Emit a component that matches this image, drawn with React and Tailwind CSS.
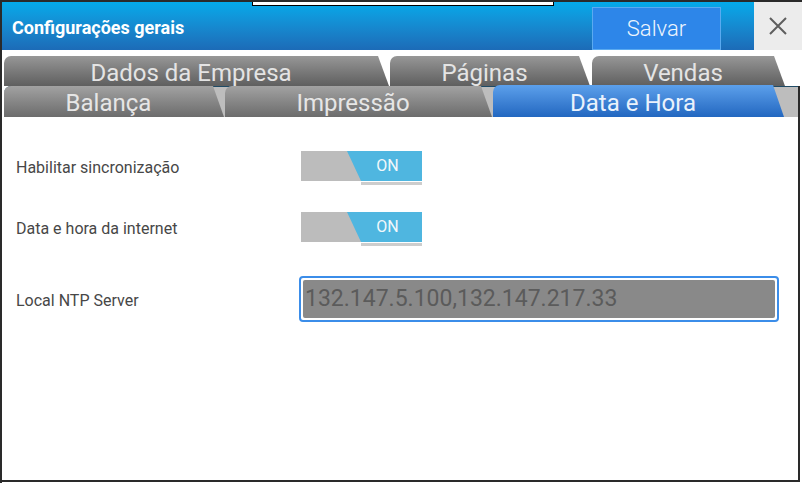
import React from "react";

function Switch() {
  return (
    <div className="flex flex-col w-[121px]">
      <div className="relative h-[30px] w-[121px] bg-[#bcbcbc]">
        <div className="absolute inset-0 bg-[#4fb6e0] [clip-path:polygon(46px_0,100%_0,100%_100%,60px_100%)]" />
        <div className="absolute inset-y-0 left-[60px] right-0 flex items-center justify-center pr-[8px] text-[16px] text-[#f2f8fb]">
          ON
        </div>
      </div>
      <div className="mt-[1px] ml-[60px] h-[3px] w-[61px] bg-[#cdcdcd]" />
    </div>
  );
}

const slant = "[clip-path:polygon(0_0,calc(100%_-_11px)_0,100%_100%,0_100%)]";

export default function App() {
  return (
    <div className="relative w-[802px] h-[483px] overflow-hidden bg-white border-l-2 border-t-2 border-[#2a2a2a] font-['Roboto','Liberation_Sans',sans-serif]">
      {/* background window strip */}
      <div className="absolute top-[-1px] left-[250px] w-[302px] h-[5px] bg-white border border-black z-10" />

      {/* Header */}
      <div className="flex h-[48px] items-stretch bg-gradient-to-b from-[#03aaea] to-[#1c6bb7]">
        <div className="flex flex-1 items-center pl-[10px] pt-[2px] text-[18px] font-bold text-white">
          Configurações gerais
        </div>
        <div className="flex items-center pr-[33px]">
          <div className="mt-[4px] flex h-[43px] w-[129px] items-center justify-center border border-[#5aaaf0] bg-[#2d86e9] text-[22px] font-light text-[#eef5fd]">
            Salvar
          </div>
        </div>
        <div className="flex w-[48px] items-center justify-center bg-[#ececec]">
          <svg width="20" height="20" viewBox="0 0 20 20">
            <path d="M2 2 L18 18 M18 2 L2 18" stroke="#5e5e5e" strokeWidth="2" fill="none" />
          </svg>
        </div>
      </div>

      {/* Tabs row 1 */}
      <div className="mt-[6px] ml-[2px] flex h-[30px] gap-[1px]">
        <div className={`flex w-[385px] justify-center pr-[11px] pt-[3px] rounded-tl-[7px] rounded-tr-[4px] bg-gradient-to-b from-[#979797] to-[#5f5f5f] text-[24px] leading-[28px] text-[#e4e4e4] ${slant}`}>
          Dados da Empresa
        </div>
        <div className={`flex w-[200px] justify-center pr-[11px] pt-[3px] rounded-tl-[7px] rounded-tr-[4px] bg-gradient-to-b from-[#979797] to-[#5f5f5f] text-[24px] leading-[28px] text-[#e4e4e4] ${slant}`}>
          Páginas
        </div>
        <div className={`ml-[1px] flex w-[193px] justify-center pr-[11px] pt-[3px] rounded-tl-[7px] rounded-tr-[4px] bg-gradient-to-b from-[#979797] to-[#5f5f5f] text-[24px] leading-[28px] text-[#e4e4e4] ${slant}`}>
          Vendas
        </div>
      </div>

      {/* Tabs row 2 + content */}
      <div className="flex w-[798px] h-[396px] flex-col border-r-2 border-b-2 border-[#2a2a2a]">
        <div className="ml-[2px] flex h-[31px] rounded-tl-[7px] border-t border-[#1f4b66] bg-[#bdbdbd]">
          <div className={`-mt-px flex h-[31px] w-[220px] justify-center pr-[11px] pt-[3px] rounded-tl-[7px] rounded-tr-[4px] bg-gradient-to-b from-[#a2a2a2] to-[#6c6c6c] text-[24px] leading-[28px] text-[#e6e6e6] ${slant}`}>
            Balança
          </div>
          <div className={`-mt-px ml-[1px] flex h-[31px] w-[267px] justify-center pr-[11px] pt-[3px] rounded-tl-[7px] rounded-tr-[4px] bg-gradient-to-b from-[#a2a2a2] to-[#6c6c6c] text-[24px] leading-[28px] text-[#e6e6e6] ${slant}`}>
            Impressão
          </div>
          <div className={`-mt-[2px] ml-[1px] flex h-[32px] w-[291px] justify-center pr-[11px] pt-[4px] rounded-tl-[7px] rounded-tr-[5px] bg-gradient-to-b from-[#5ca0eb] to-[#2267c0] text-[24px] leading-[28px] text-[#eaf2fc] ${slant}`}>
            Data e Hora
          </div>
        </div>

        {/* Content */}
        <div className="flex flex-1 flex-col pt-[34px] pl-[14px] text-[16px] text-[#474747]">
          <div className="flex items-start">
            <div className="flex h-[30px] w-[285px] items-center pt-[4px]">Habilitar sincronização</div>
            <Switch />
          </div>
          <div className="mt-[27px] flex items-start">
            <div className="flex h-[30px] w-[285px] items-center pt-[4px]">Data e hora da internet</div>
            <Switch />
          </div>
          <div className="mt-[30px] flex items-center">
            <div className="w-[283px] pt-[4px]">Local NTP Server</div>
            <div className="flex h-[46px] w-[480px] rounded-[4px] border-2 border-[#3b8de9] p-[2px]">
              <div className="flex flex-1 items-center rounded-[2px] bg-[#898989] pl-[2px] text-[23px] text-[#5b5b5b]">
                132.147.5.100,132.147.217.33
              </div>
            </div>
          </div>
        </div>
      </div>
    </div>
  );
}
